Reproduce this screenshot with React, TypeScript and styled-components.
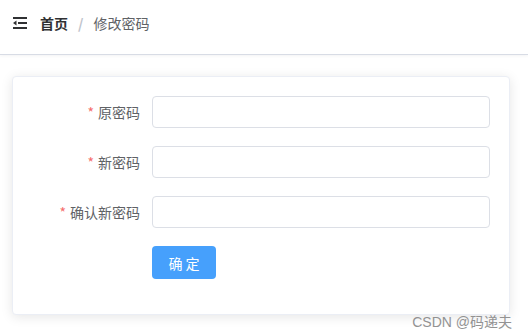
import React from "react";
import styled, { createGlobalStyle } from "styled-components";

const GlobalStyle = createGlobalStyle`
  body {
    margin: 0;
    background: #fff;
    font-family: "Noto Sans CJK SC", "Liberation Sans", sans-serif;
    font-size: 14px;
  }
`;

type Field = { label: string };

const fields: Field[] = [
  { label: "原密码" },
  { label: "新密码" },
  { label: "确认新密码" },
];

const FoldIcon = () => (
  <svg width="14" height="12" viewBox="0 0 14 12">
    <rect x="0" y="0" width="14" height="2" fill="#303133" />
    <rect x="5" y="5" width="9" height="2" fill="#303133" />
    <path d="M0 6 L3.5 3.5 L3.5 8.5 Z" fill="#303133" />
    <rect x="0" y="10" width="14" height="2" fill="#303133" />
  </svg>
);

const App: React.FC = () => {
  return (
    <Page>
      <GlobalStyle />
      <Header>
        <FoldIcon />
        <Crumbs>
          <CrumbHome>首页</CrumbHome>
          <Sep>/</Sep>
          <CrumbCurrent>修改密码</CrumbCurrent>
        </Crumbs>
      </Header>
      <Main>
        <Card>
          {fields.map((f) => (
            <FormItem key={f.label}>
              <Label>
                <Star>*</Star>
                {f.label}
              </Label>
              <Input type="password" />
            </FormItem>
          ))}
          <FormItem last>
            <Label />
            <SubmitButton>确 定</SubmitButton>
          </FormItem>
        </Card>
      </Main>
      <Watermark>CSDN @码递夫</Watermark>
    </Page>
  );
};

export default App;

const Page = styled.div`
  position: relative;
  width: 528px;
  height: 335px;
  overflow: hidden;
  background: #fff;
`;

const Header = styled.div`
  height: 55px;
  border-bottom: 1px solid #d8dce5;
  display: flex;
  align-items: center;
  padding-left: 13px;
  gap: 13px;
  box-sizing: border-box;
  padding-bottom: 8px;
  box-shadow: 0 1px 3px rgba(0, 21, 41, 0.05);
`;

const Crumbs = styled.div`
  display: flex;
  align-items: center;
  font-size: 14px;
  line-height: 20px;
`;

const CrumbHome = styled.span`
  color: #303133;
  font-weight: 700;
`;

const Sep = styled.span`
  color: #c0c4cc;
  margin: 0 10px 0 10px;
  font-weight: 700;
`;

const CrumbCurrent = styled.span`
  color: #606266;
`;

const Main = styled.div`
  padding: 21px 18px 0 12px;
`;

const Card = styled.div`
  background: #fff;
  border: 1px solid #ebeef5;
  border-radius: 4px;
  box-shadow: 0 2px 12px 0 rgba(0, 0, 0, 0.1);
  padding: 19px 19px 35px 19px;
`;

const FormItem = styled.div<{ last?: boolean }>`
  display: flex;
  align-items: center;
  margin-bottom: ${(p) => (p.last ? "0" : "18px")};
`;

const Label = styled.label`
  width: 120px;
  flex-shrink: 0;
  text-align: right;
  padding-right: 12px;
  box-sizing: border-box;
  color: #606266;
  font-size: 14px;
  line-height: 32px;
`;

const Star = styled.span`
  color: #f56c6c;
  margin-right: 4px;
`;

const Input = styled.input`
  flex: 1;
  height: 32px;
  box-sizing: border-box;
  border: 1px solid #dcdfe6;
  border-radius: 4px;
  padding: 0 15px;
  outline: none;
  background: #fff;
`;

const SubmitButton = styled.button`
  width: 64px;
  height: 33px;
  border: none;
  border-radius: 4px;
  background: #46a0fc;
  color: #fff;
  font-family: "Noto Sans CJK SC", sans-serif;
  font-size: 14px;
  padding: 0;
  cursor: pointer;
`;

const Watermark = styled.div`
  position: absolute;
  right: 16px;
  bottom: 4px;
  color: #888;
  font-size: 14px;
  font-family: "Liberation Sans", "Noto Sans CJK SC", sans-serif;
  opacity: 0.9;
`;
